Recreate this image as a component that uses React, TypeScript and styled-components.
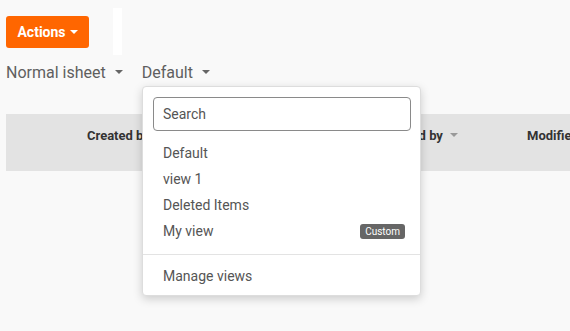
import styled, { createGlobalStyle } from 'styled-components';

const GlobalStyle = createGlobalStyle`
  html, body {
    margin: 0;
    padding: 0;
    background: #f9f9f9;
    font-family: Roboto, "Liberation Sans", sans-serif;
  }
`;

const Page = styled.div`
  width: 570px;
  height: 331px;
  overflow: hidden;
  padding: 8px 0 0 6px;
  box-sizing: border-box;
  position: relative;
`;

const Toolbar = styled.div`
  display: flex;
  align-items: flex-start;
  height: 47px;
`;

const ActionsButton = styled.button`
  margin-top: 8px;
  width: 83px;
  height: 32px;
  border: none;
  border-radius: 3px;
  background: #ff6600;
  color: #fff;
  font-family: inherit;
  font-size: 14px;
  font-weight: 700;
  display: flex;
  align-items: center;
  justify-content: center;
  gap: 4px;
  padding: 0 0 1px;
`;

const Spacer = styled.div`
  margin-left: 24px;
  width: 9px;
  height: 47px;
  background: #fff;
`;

const Caret = styled.span<{ $size?: number; $color?: string }>`
  display: inline-block;
  width: 0;
  height: 0;
  border-left: ${(p) => p.$size ?? 4}px solid transparent;
  border-right: ${(p) => p.$size ?? 4}px solid transparent;
  border-top: ${(p) => p.$size ?? 4}px solid ${(p) => p.$color ?? 'currentColor'};
`;

const ViewBar = styled.div`
  display: flex;
  gap: 19px;
  margin-top: 5px;
  height: 30px;
`;

const ViewSelect = styled.div`
  display: flex;
  align-items: center;
  gap: 9px;
  color: #5f5f5f;
  font-size: 16px;
  height: 20px;
  padding-top: 2px;
`;

const TableHeader = styled.div`
  margin-top: 24px;
  height: 57px;
  background: #e3e3e3;
  display: grid;
  grid-template-columns: 81px 290px 150px 1fr;
  padding-top: 13px;
  box-sizing: border-box;
  font-size: 13px;
  font-weight: 700;
  color: #333;
  white-space: nowrap;
`;

const HeaderCell = styled.div`
  display: flex;
  align-items: center;
  gap: 7px;
  height: 16px;
`;

const Menu = styled.div`
  position: absolute;
  left: 142px;
  top: 86px;
  width: 279px;
  background: #fff;
  border: 1px solid #ddd;
  border-radius: 4px;
  box-sizing: border-box;
  box-shadow: 0 3px 10px rgba(0, 0, 0, 0.18);
  padding: 10px 0 6px;
  z-index: 2;
`;

const SearchInput = styled.input`
  display: block;
  margin: 0 10px;
  width: 258px;
  height: 34px;
  box-sizing: border-box;
  border: 1px solid #8a8a8a;
  border-radius: 4px;
  padding: 0 9px;
  font-family: inherit;
  font-size: 14px;
  color: #333;
  &::placeholder {
    color: #555;
  }
`;

const MenuList = styled.div`
  padding: 9px 0 10px;
  border-bottom: 1px solid #e3e3e3;
`;

const MenuItem = styled.div<{ $gapTop?: number }>`
  display: flex;
  align-items: center;
  justify-content: space-between;
  height: 26px;
  margin-top: ${(p) => p.$gapTop ?? 0}px;
  padding: 0 15px 0 20px;
  font-size: 14px;
  color: #555;
`;

const Badge = styled.span`
  background: #666;
  color: #fff;
  font-size: 10px;
  line-height: 15px;
  padding: 0 5px;
  border-radius: 3px;
`;

const views = [
  { name: 'Default' },
  { name: 'view 1' },
  { name: 'Deleted Items' },
  { name: 'My view', custom: true },
];

export default function App() {
  return (
    <Page>
      <GlobalStyle />
      <Toolbar>
        <ActionsButton>
          Actions <Caret $size={4} $color="#fff" />
        </ActionsButton>
        <Spacer />
      </Toolbar>

      <ViewBar>
        <ViewSelect>
          Normal isheet <Caret $size={4} $color="#666" />
        </ViewSelect>
        <ViewSelect>
          Default <Caret $size={4} $color="#666" />
        </ViewSelect>
      </ViewBar>

      <TableHeader>
        <div />
        <HeaderCell>
          Created by <Caret $size={4} $color="#999" />
        </HeaderCell>
        <HeaderCell>
          Updated by <Caret $size={4} $color="#999" />
        </HeaderCell>
        <HeaderCell>Modified by</HeaderCell>
      </TableHeader>

      <Menu>
        <SearchInput placeholder="Search" />
        <MenuList>
          {views.map((v) => (
            <MenuItem key={v.name}>
              {v.name}
              {v.custom && <Badge>Custom</Badge>}
            </MenuItem>
          ))}
        </MenuList>
        <MenuItem $gapTop={8}>Manage views</MenuItem>
      </Menu>
    </Page>
  );
}
